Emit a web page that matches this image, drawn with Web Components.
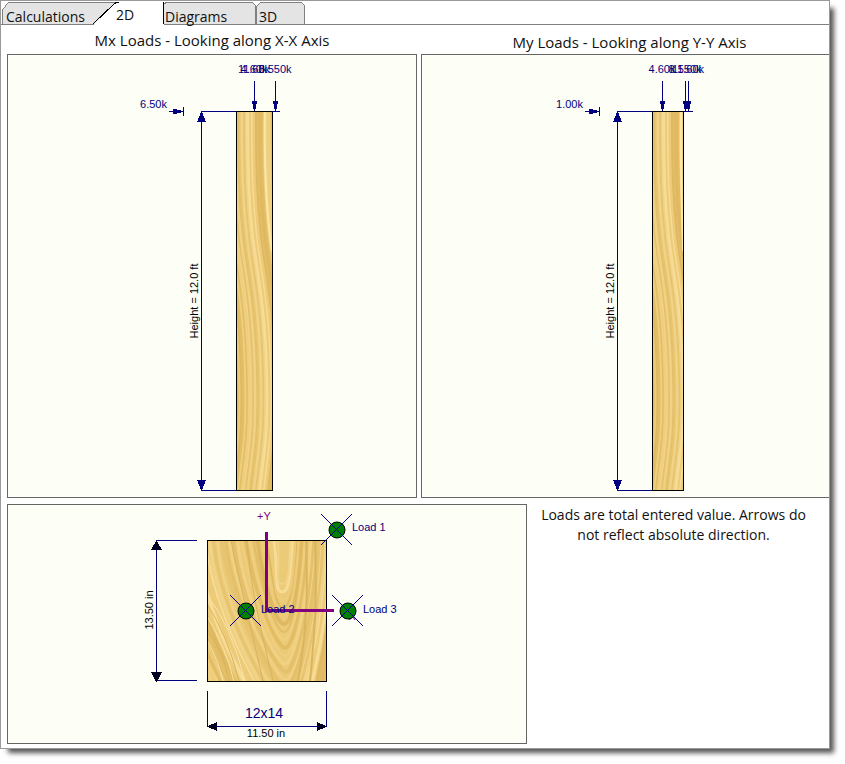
<!DOCTYPE html>
<html lang="en">
<head>
<meta charset="utf-8">
<title>Column Loads - 2D</title>
<style>
  body { margin: 0; background: #fff; color: #111; font-family: "Open Sans", "Noto Sans", sans-serif; font-size: 14px; }
</style>
</head>
<body>
<app-frame>
  <tab-bar slot="tabs">
    <tab-item kind="first">Calculations</tab-item>
    <tab-item kind="active">2D</tab-item>
    <tab-item kind="chamfer">Diagrams</tab-item>
    <tab-item kind="last">3D</tab-item>
  </tab-bar>
  <view-row>
    <titled-panel heading="Mx Loads - Looking along X-X Axis">
      <column-elevation origin="8" span="408" left="236" right="272" reach="279" dim="201" side="169" lateral="6.50k"
        loads="254:4.60k,254:11.60k,275:8.550k"></column-elevation>
    </titled-panel>
    <titled-panel heading="My Loads - Looking along Y-Y Axis" open-right>
      <column-elevation origin="422" span="407" left="652" right="683" reach="692" dim="617" side="585" lateral="1.00k"
        loads="662:4.60k,685:8.550k,688:11.60k"></column-elevation>
    </titled-panel>
  </view-row>
  <view-row lower>
    <titled-panel><section-plan></section-plan></titled-panel>
    <load-note>Loads are total entered value. Arrows do not reflect absolute direction.</load-note>
  </view-row>
</app-frame>

<script>
const rect = (x, y, w, h, fill) => `<rect x="${x}" y="${y}" width="${w}" height="${h}" fill="${fill}"/>`;
const tri = (points, fill) => `<polygon points="${points}" fill="${fill}"/>`;
const NAVY = '#000080';
const svgStyle = `
  :host { display: block; }
  .drawing { display: block; width: 100%; height: auto; shape-rendering: crispEdges; }
  text { font-family: "Liberation Sans", Arial, sans-serif; font-size: 11px; fill: #000080; }
  .dark { fill: #000; }
  .mid { text-anchor: middle; }
  .end { text-anchor: end; }
  .grain { fill: none; shape-rendering: auto; }
`;
const tones = ['#f1d388', '#e4c06b', '#efce7e', '#dfb961', '#f7dc95', '#e7c470', '#f1d285', '#e2bd66', '#edcb79'];

class AppFrame extends HTMLElement {
  constructor() {
    super();
    this.attachShadow({ mode: 'open' }).innerHTML = `
      <style>
        :host { display: block; padding: 0 15px 15px 0; }
        main { display: flex; flex-direction: column; border: 1px solid #999; background: #fff; padding-bottom: 4px;
               box-shadow: 6px 6px 5px -2px #555; }
      </style>
      <main><slot name="tabs"></slot><slot></slot></main>`;
  }
}
customElements.define('app-frame', AppFrame);

class TabBar extends HTMLElement {
  constructor() {
    super();
    this.attachShadow({ mode: 'open' }).innerHTML = `
      <style>
        :host { display: block; }
        nav { display: flex; align-items: flex-end; height: 23px; padding-left: 1px; border-bottom: 1px solid #808080; }
      </style>
      <nav aria-label="Views"><slot></slot></nav>`;
  }
}
customElements.define('tab-bar', TabBar);

class TabItem extends HTMLElement {
  connectedCallback() {
    const kind = this.getAttribute('kind');
    const shape = {
      first: { w: 115, pad: 4, art: '<path d="M0 24V9Q3 7 4 4Q6 1 10 1H115V24" fill="#e4e4e4" stroke="#808080"/>' },
      active: { w: 71, pad: 23, art: '<path d="M0 24L21 3Q23 1 26 1H71V24Z" fill="#fff"/><path d="M0 23L21 3Q23 1 26 1M70 1V23" fill="none" stroke="#000"/>' },
      chamfer: { w: 92, pad: 1, art: '<path d="M-1 24V4L3 1H88L91 4V24" fill="#e4e4e4" stroke="#808080"/>' },
      last: { w: 50, pad: 3, art: '<path d="M0 24V6L5 1H45L48 4V24" fill="#e4e4e4" stroke="#808080"/>' }
    }[kind];
    this.attachShadow({ mode: 'open' }).innerHTML = `
      <style>
        :host { display: block; position: relative; }
        :host([kind="active"]) { margin-left: -24px; margin-bottom: -1px; z-index: 1; }
        button { display: flex; align-items: flex-end; position: relative; width: ${shape.w}px; height: 23px; padding: 0 0 0 ${shape.pad}px;
                 border: 0; background: none; color: #111; font: inherit; line-height: 14px; text-align: left; }
        :host([kind="active"]) button { height: 24px; padding-bottom: 3px; }
        svg { position: absolute; inset: 0; width: 100%; height: 100%; }
        span { position: relative; }
      </style>
      <button type="button" aria-current="${kind === 'active'}">
        <svg aria-hidden="true" shape-rendering="crispEdges">${shape.art}</svg><span><slot></slot></span>
      </button>`;
  }
}
customElements.define('tab-item', TabItem);

class ViewRow extends HTMLElement {
  constructor() {
    super();
    this.attachShadow({ mode: 'open' }).innerHTML = `
      <style>
        :host { display: grid; grid-template-columns: 410fr 408fr; gap: 4px; padding-left: 6px; }
        :host([lower]) { grid-template-columns: 520fr 302fr; gap: 0; padding-top: 6px; align-items: start; }
      </style><slot></slot>`;
  }
}
customElements.define('view-row', ViewRow);

class TitledPanel extends HTMLElement {
  connectedCallback() {
    const heading = this.getAttribute('heading');
    this.attachShadow({ mode: 'open' }).innerHTML = `
      <style>
        :host { display: block; min-width: 0; }
        h2 { margin: 0; padding-top: 5px; height: 24px; font: inherit; font-size: 15px; line-height: 20px; text-align: center; }
        :host([open-right]) h2 { padding: 7px 0 0 9px; height: 22px; }
        div { border: 1px solid #666; background: #fdfef5; }
        :host([open-right]) div { border-right: 0; }
      </style>
      ${heading ? `<h2>${heading}</h2>` : ''}<div><slot></slot></div>`;
  }
}
customElements.define('titled-panel', TitledPanel);

class ColumnElevation extends HTMLElement {
  connectedCallback() {
    const n = k => Number(this.getAttribute(k));
    const origin = n('origin'), span = n('span'), left = n('left'), right = n('right'), dim = n('dim'), side = n('side'), reach = n('reach');
    const w = right - left;
    let grain = '';
    for (let i = 0, x = -24; x < w + 4; x += 2, i++) {
      const c = tones[(i * 4 + (i >> 2)) % tones.length];
      grain += `<path d="M${x} 0C${x} 60 ${x + 1} 90 ${x + 5} 125S${x + 17} 190 ${x + 19} 260S${x + 16} 340 ${x + 12} 380" stroke="${c}" stroke-width="${i % 3 ? 2 : 3}"/>`;
    }
    grain += `<path d="M29 0C28 60 30 100 ${w} 140" stroke="#fbe7a5" stroke-width="2"/>`;
    const loads = this.getAttribute('loads').split(',').map(s => s.split(':'));
    const arrows = loads.map(([xs, label]) => {
      const x = Number(xs);
      return rect(x, 81, 1, 30, NAVY) + rect(x - 2, 101, 5, 3, NAVY) + rect(x - 1, 104, 3, 5, NAVY)
        + `<text class="mid" x="${x}" y="73">${label}</text>`;
    }).join('');
    this.attachShadow({ mode: 'open' }).innerHTML = `
      <style>${svgStyle}</style>
      <svg class="drawing" viewBox="${origin} 55 ${span} 442" role="img" aria-label="Column elevation">
        <svg x="${left}" y="111" width="${w}" height="380" viewBox="0 0 ${w} 380">
          <rect width="${w}" height="380" fill="#ebca78"/><g class="grain">${grain}</g>
        </svg>
        ${rect(left, 111, 1, 380, '#000')}${rect(right, 111, 1, 380, '#000')}${rect(left, 490, w + 1, 1, '#000')}
        ${rect(left, 111, w, 1, '#000')}${rect(dim, 111, left - dim, 1, NAVY)}${rect(right, 111, reach - right + 1, 1, NAVY)}
        ${rect(dim, 490, left - dim, 1, NAVY)}${rect(dim, 111, 1, 380, NAVY)}
        ${tri(`${dim},112 ${dim + 1},112 ${dim + 5},122 ${dim - 4},122`, NAVY)}
        ${tri(`${dim},490 ${dim + 1},490 ${dim + 5},480 ${dim - 4},480`, NAVY)}
        ${rect(side, 111, 15, 1, NAVY)}${rect(side + 14, 107, 1, 9, NAVY)}
        ${rect(side + 4, 109, 4, 5, NAVY)}${rect(side + 8, 110, 4, 3, NAVY)}
        <text class="end" x="${side - 2}" y="108">${this.getAttribute('lateral')}</text>
        <text class="dark mid" transform="translate(${dim - 3} 301) rotate(-90)">Height = 12.0 ft</text>
        ${arrows}
      </svg>`;
  }
}
customElements.define('column-elevation', ColumnElevation);

class SectionPlan extends HTMLElement {
  connectedCallback() {
    let grain = '';
    for (let k = 34; k >= 0; k--) {
      const lx = 70 - k * 4, rx = 84 + k * 2, tip = 44 + k * 8, tx = 75 + Math.round(k / 3);
      const c = tones[(k * 4 + (k >> 2)) % tones.length];
      const bow = k % 5;
      grain += `<path d="M${lx} -4C${lx + 5 + bow} ${Math.round(tip * .45)} ${tx - 9} ${tip} ${tx} ${tip}S${rx - 3} ${Math.round(tip * .5)} ${rx} -4" stroke="${c}" stroke-width="${k % 3 + 2}"/>`;
    }
    grain += `<path d="M0 55Q24 85 38 141M0 76Q18 106 27 141M0 100Q12 122 16 141" stroke="#fae4a8"/>
      <path d="M0 64Q20 94 32 141M0 88Q16 112 22 141M24 0C34 50 40 70 56 141M40 0C42 40 54 90 66 141" stroke="#d9b25c"/>
      <path d="M99 0C101 50 100 90 91 141M108 0C110 60 108 90 103 141" stroke="#dbb45e" stroke-width="2"/>`;
    const mark = (x, y, n, tx, ty) => `
      <circle cx="${x}" cy="${y}" r="8" fill="#008000" stroke="#000" shape-rendering="auto"/>
      <path d="M${x - 16} ${y - 16}L${x + 15} ${y + 15}M${x + 15} ${y - 16}L${x - 16} ${y + 15}" stroke="${NAVY}" fill="none"/>
      <text x="${tx}" y="${ty}">Load ${n}</text>`;
    this.attachShadow({ mode: 'open' }).innerHTML = `
      <style>${svgStyle}
        .axis { fill: #800080; }
        .size { font-size: 14px; }
      </style>
      <svg class="drawing" viewBox="8 505 518 238" role="img" aria-label="Column cross section">
        <svg x="207" y="540" width="120" height="142" viewBox="0 0 120 142">
          <rect width="120" height="142" fill="#ebca78"/><g class="grain">${grain}</g>
        </svg>
        ${rect(207, 540, 120, 1, '#000')}${rect(207, 681, 120, 1, '#000')}${rect(207, 540, 1, 142, '#000')}${rect(326, 540, 1, 142, '#000')}
        ${rect(156, 540, 1, 141, NAVY)}${rect(156, 540, 41, 1, NAVY)}${rect(156, 680, 41, 1, NAVY)}
        ${tri('156,541 157,541 162,550 151,550', '#000020')}${tri('156,682 157,682 162,672 151,672', '#000020')}
        ${rect(207, 691, 1, 36, NAVY)}${rect(326, 691, 1, 36, NAVY)}${rect(207, 726, 120, 1, NAVY)}
        ${tri('208,726 208,727 217,731 217,722', '#000020')}${tri('326,726 326,727 317,731 317,722', '#000020')}
        <text class="dark mid" transform="translate(153 610) rotate(-90)">13.50 in</text>
        <text class="mid size" x="264" y="718">12x14</text>
        <text class="dark mid" x="266" y="737">11.50 in</text>
        <text class="axis" x="257" y="520">+Y</text>
        <text class="axis" x="342" y="620">+X</text>
        ${rect(265, 532, 3, 79, '#800080')}${rect(265, 609, 69, 3, '#800080')}
        ${mark(337, 530, 1, 352, 531)}${mark(246, 611, 2, 261, 613)}${mark(348, 611, 3, 363, 613)}
      </svg>`;
  }
}
customElements.define('section-plan', SectionPlan);

class LoadNote extends HTMLElement {
  constructor() {
    super();
    this.attachShadow({ mode: 'open' }).innerHTML = `
      <style>
        :host { display: block; padding-right: 9px; text-align: center; }
        p { margin: 0; padding: 1px 8px; line-height: 20px; }
      </style><p><slot></slot></p>`;
  }
}
customElements.define('load-note', LoadNote);
</script>
</body>
</html>
